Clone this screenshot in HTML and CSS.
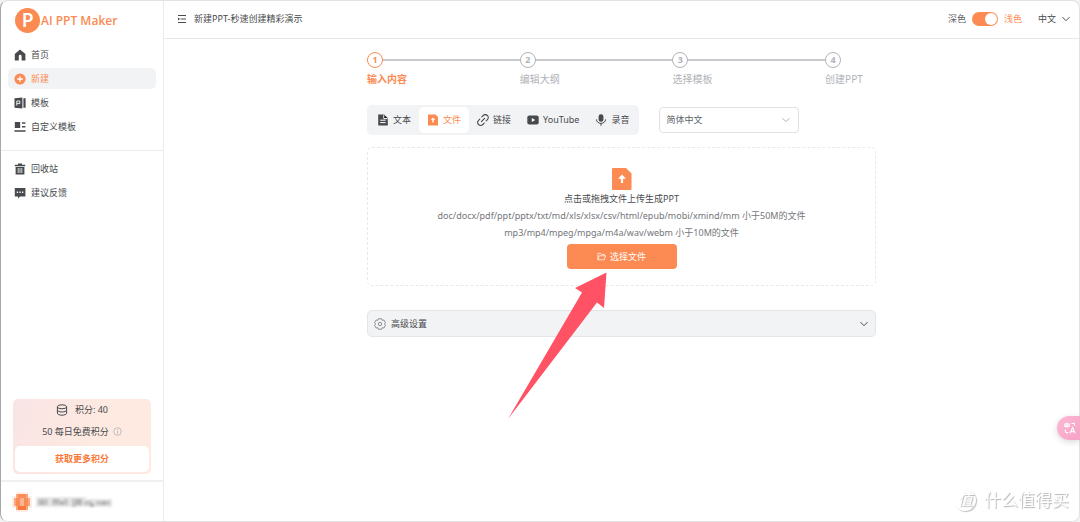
FILE: index.html
```html
<!DOCTYPE html>
<html lang="zh-CN">
  <head>
    <meta charset="utf-8" />
    <title>AI PPT Maker</title>
    <link rel="stylesheet" href="styles.css">
  </head>
  <body>
    <div class="app">
      <aside class="sidebar">
        <a class="logo" href="#">
          <span class="logo-mark">P</span>
          <span class="logo-text">AI PPT Maker</span>
        </a>
        <nav class="menu">
          <a class="menu-item" href="#">
            <svg class="icon" viewBox="0 0 12 12"><path fill="currentColor" d="M6 .6 11.4 5v6.4H7.6V7.2a1.4 1.4 0 0 0-2.8 0v4.2H.8V5z"/><path fill="#fff" d="M5.4 7.4h1.3v4H5.4z" opacity=".4"/></svg>
            首页
          </a>
          <a class="menu-item active" href="#">
            <svg class="icon" viewBox="0 0 12 12"><circle cx="6" cy="6" r="5.6" fill="currentColor"/><path stroke="#fff" stroke-width="1.3" d="M6 3.2v5.6M3.2 6h5.6"/></svg>
            新建
          </a>
          <a class="menu-item" href="#">
            <svg class="icon" viewBox="0 0 12 12"><path fill="currentColor" d="M.5 1.3 8.4.4v11.2L.5 10.7zM9.4 1.2h2.2v9.6H9.4z"/><path fill="none" stroke="#fff" stroke-width=".9" d="M2.8 8.6V4h3v2.600h-3"/></svg>
            模板
          </a>
          <a class="menu-item" href="#">
            <svg class="icon" viewBox="0 0 12 12"><path fill="currentColor" d="M.8 1h5.4v6H.8zM8 1.2h3.4v1.6H8zM8 5h3.4v1.6H8zM.4 9.2h11.2v1.6H.4z"/></svg>
            自定义模板
          </a>
        </nav>
        <nav class="menu menu-extra">
          <a class="menu-item" href="#">
            <svg class="icon" viewBox="0 0 12 12"><path fill="currentColor" d="M4 .6h4v1.2h3.2v1.5H.8V1.8H4zM1.6 4h8.8v7.4H1.6z"/><path stroke="#fff" stroke-width=".8" d="M4.2 5v5M6 5v5M7.8 5v5"/></svg>
            回收站
          </a>
          <a class="menu-item" href="#">
            <svg class="icon" viewBox="0 0 12 12"><path fill="currentColor" d="M.8 1h10.6v8.4H6L4 11.4v-2H.8z"/><path fill="#fff" d="M2.8 4.6h1.3v1.3H2.8zM5.4 4.6h1.3v1.3H5.4zM8 4.6h1.3v1.3H8z"/></svg>
            建议反馈
          </a>
        </nav>
        <section class="credits">
          <p class="credits-row">
            <svg class="icon" viewBox="0 0 12 12" fill="none" stroke="currentColor"><ellipse cx="6" cy="2.8" rx="4.6" ry="2"/><path d="M1.4 2.8v6.4c0 1.1 2 2 4.6 2s4.6-.9 4.6-2V2.8M1.4 6c0 1.1 2 2 4.6 2s4.6-.9 4.6-2"/></svg>
            积分: 40
          </p>
          <p class="credits-row free">
            50 每日免费积分
            <svg class="info" viewBox="0 0 10 10" fill="none" stroke="#a8abb2" stroke-width=".8"><circle cx="5" cy="5" r="4.2"/><path d="M5 4.3v3.2M5 2.4v1"/></svg>
          </p>
          <button class="credits-button" type="button">获取更多积分</button>
        </section>
        <div class="account">
          <svg class="avatar" viewBox="0 0 20 20" shape-rendering="crispEdges">
            <path fill="#fdeee6" d="M4 0h12v4h4v12h-4v4H4v-4H0V4h4z"/>
            <path fill="#fba77f" d="M4 2h12v16H4zM2 6h16v8H2z"/>
            <path fill="#f98d58" d="M6 2h8v14H6zM4 6h12v8H4z"/>
            <path fill="#fbb392" d="M8 6h4v8H8z"/>
            <path fill="#f7783a" d="M6 14h8v4H6z"/>
          </svg>
          <svg class="account-name" viewBox="0 0 76 10" shape-rendering="crispEdges">
            <path fill="#e6e6e6" d="M0 0h50v10H0zM50 2h26v8H50z"/>
            <path fill="#c4c4c4" d="M2 2h10v6H2zM16 2h8v6h-8zM28 2h4v6h-4zM36 2h4v8h-4zM48 4h8v4h-8zM60 4h14v4H60z"/>
            <path fill="#b4b4b4" d="M4 4h4v4H4zM18 2h4v4h-4zM24 4h4v4h-4zM40 2h6v6h-6zM54 6h4v4h-4zM66 4h4v4h-4z"/>
          </svg>
        </div>
      </aside>

      <div class="page">
        <header class="topbar">
          <button class="fold" type="button" aria-label="折叠菜单">
            <svg viewBox="0 0 10 10" stroke="currentColor" fill="none"><path d="M1 1.5h8M3.5 5H9M1 8.5h8"/><path fill="currentColor" stroke="none" d="M1 3.4v3.2L3 5z"/></svg>
          </button>
          <h1 class="title">新建PPT-秒速创建精彩演示</h1>
          <label class="theme">
            <span>深色</span>
            <input class="switch" type="checkbox" checked>
            <span class="theme-light">浅色</span>
          </label>
          <button class="language" type="button">
            中文
            <svg class="chevron" viewBox="0 0 10 10"><path d="M1.5 3.2 5 6.7l3.5-3.5"/></svg>
          </button>
        </header>

        <main class="content">
          <ol class="steps">
            <li class="step current"><span class="step-number">1</span><span class="step-label">输入内容</span></li>
            <li class="step"><span class="step-number">2</span><span class="step-label">编辑大纲</span></li>
            <li class="step"><span class="step-number">3</span><span class="step-label">选择模板</span></li>
            <li class="step"><span class="step-number">4</span><span class="step-label">创建PPT</span></li>
          </ol>

          <div class="source">
            <div class="tabs">
              <button class="tab" type="button">
                <svg class="icon" viewBox="0 0 12 12"><path fill="currentColor" d="M1.2.6h6l3.6 3.6v7.2H1.2z"/><path stroke="#fff" d="M3.2 6.2h5.4M3.2 8.6h5.4M6.8 1v3.6h3.6"/></svg>
                文本
              </button>
              <button class="tab active" type="button">
                <svg class="icon" viewBox="0 0 12 12"><path fill="currentColor" d="M1 .6h7.6L11 3v8.4H1z"/><path fill="#fff" d="m6 3.4 2.4 2.4H6.7v2.6H5.3V5.8H3.6z"/></svg>
                文件
              </button>
              <button class="tab" type="button">
                <svg class="icon" viewBox="0 0 12 12" fill="none" stroke="currentColor" stroke-width="1.1" stroke-linecap="round"><path d="M4.8 2.8 6.2 1.5a2.9 2.9 0 0 1 4.2 4.2L9.2 6.9M7.2 9.2l-1.4 1.3a2.9 2.9 0 0 1-4.2-4.2l1.2-1.2M4.4 7.6l3.2-3.2"/></svg>
                链接
              </button>
              <button class="tab" type="button">
                <svg class="icon" viewBox="0 0 12 12"><rect x=".3" y="1.4" width="11.4" height="9.2" rx="2" fill="currentColor"/><path fill="#fff" d="m4.8 4 3.4 2-3.4 2z"/></svg>
                YouTube
              </button>
              <button class="tab" type="button">
                <svg class="icon" viewBox="0 0 12 12"><rect x="3.6" y=".2" width="4.8" height="7.6" rx="2.4" fill="currentColor"/><path fill="none" stroke="currentColor" d="M1.4 5.4a4.6 4 0 0 0 9.2 0M6 9.4v2.4"/></svg>
                录音
              </button>
            </div>
            <div class="select">
              <select aria-label="语言">
                <option>简体中文</option>
              </select>
              <svg class="chevron" viewBox="0 0 10 10"><path d="M1.5 3.2 5 6.7l3.5-3.5"/></svg>
            </div>
          </div>

          <section class="upload">
            <svg class="upload-icon" viewBox="0 0 20 22"><path fill="#fb8b52" d="M1 0h13l5.500 5.500V21a1 1 0 0 1-1 1H1a1 1 0 0 1-1-1V1a1 1 0 0 1 1-1z"/><path fill="#fff" d="m10 6.500 4 4.300h-2.900V15H8.900v-4.200H6z"/></svg>
            <p class="upload-title">点击或拖拽文件上传生成PPT</p>
            <p class="upload-hint">doc/docx/pdf/ppt/pptx/txt/md/xls/xlsx/csv/html/epub/mobi/xmind/mm 小于50M的文件</p>
            <p class="upload-hint">mp3/mp4/mpeg/mpga/m4a/wav/webm 小于10M的文件</p>
            <button class="upload-button" type="button">
              <svg viewBox="0 0 10 10" fill="none" stroke="currentColor" stroke-width=".8"><path d="M1 8.600V1.400h2.800l1 1.200H8.400v1.600M1 8.600l1.500-4.400h7L8.200 8.600z"/></svg>
              选择文件
            </button>
            <svg class="pointer" viewBox="0 0 99 147"><path fill="#ff5365" d="M98.500.500 67 16l7 4.500L0 147 89 30.500l7 5.500z"/></svg>
          </section>

          <button class="advanced" type="button">
            <svg class="icon" viewBox="0 0 12 12" fill="none" stroke="currentColor" stroke-width=".8"><path d="M4.300.8h3.400l.5 1.500 1.700-.3 1.600 2.800L10.400 6l1.100 1.200L9.900 10l-1.700-.3-.5 1.500H4.300l-.5-1.500-1.700.3L.5 7.200 1.600 6 .5 4.800 2.100 2l1.700.3z"/><circle cx="6" cy="6" r="1.700"/></svg>
            高级设置
            <svg class="chevron" viewBox="0 0 10 10"><path d="M1.500 3.200 5 6.700l3.500-3.500"/></svg>
          </button>
        </main>
      </div>
    </div>

    <button class="translate" type="button" aria-label="翻译">
      <svg viewBox="0 0 12 12" fill="none" stroke="#fff" stroke-width="1.100"><path d="M.8 2h4.400v2.400H.8zM3 .6v5.200M7.400 1.500h3v2.200M1.400 7.600v1.600c0 1 .5 1.400 1.400 1.400h1.600M6 11.400 8.600 5.600l2.600 5.800M7 9.600h3.200"/></svg>
    </button>
    <div class="watermark"><span class="watermark-mark">值</span>什么值得买</div>
  </body>
</html>
```
FILE: styles.css
```css
* {
  box-sizing: border-box;
}

body {
  margin: 0;
  background-color: #f3f3f3;
  color: #484a4d;
  font: 9px/14px "Noto Sans", "Noto Sans CJK SC", sans-serif;
}

button,
select {
  border: 0;
  padding: 0;
  background: none;
  color: inherit;
  font: inherit;
  cursor: pointer;
}

a {
  color: inherit;
  text-decoration: none;
}

p,
h1,
ol {
  margin: 0;
  padding: 0;
}

.app {
  display: flex;
  min-height: 100vh;
  border: 1px solid #e2e2e2;
  border-left-color: #a8a8a8;
  border-radius: 8px;
  background-color: #ffffff;
}

.icon {
  width: 12px;
  height: 12px;
  flex: none;
}

.chevron {
  width: 10px;
  height: 10px;
  fill: none;
  stroke: currentColor;
}

/* sidebar */
.sidebar {
  display: flex;
  flex-direction: column;
  flex: none;
  width: 163px;
  border-right: 1px solid #ebebeb;
}

.logo {
  display: flex;
  align-items: center;
  gap: 1px;
  padding: 7px 14px 6px;
  color: #fb8b52;
}

.logo-mark {
  width: 25px;
  height: 25px;
  border-radius: 50%;
  background-color: #fb8b52;
  color: #ffffff;
  font: bold 18px/25px Lato, sans-serif;
  text-align: center;
}

.logo-text {
  font: 600 12px/16px "Open Sans", sans-serif;
}

.menu {
  display: flex;
  flex-direction: column;
  gap: 3px;
  padding: 5px 7px 13px;
}

.menu-extra {
  padding-top: 7px;
  border-top: 1px solid #ebebeb;
}

.menu-item {
  display: flex;
  align-items: center;
  gap: 5px;
  height: 21px;
  padding-left: 6px;
  border-radius: 5px;
}

.menu-item.active {
  background-color: #f2f3f5;
  color: #fb8b52;
}

.credits {
  margin: auto 12px 6px;
  padding: 0 2px 2px;
  border-radius: 5px;
  background: linear-gradient(110deg, #f9e4e6, #feeae0 60%);
}

.credits-row {
  display: flex;
  align-items: center;
  justify-content: center;
  gap: 7px;
  height: 21px;
}

.credits-row.free {
  height: 26px;
  gap: 4px;
  padding-bottom: 3px;
}

.info {
  width: 9px;
  height: 9px;
}

.credits-button {
  width: 100%;
  height: 26px;
  border-radius: 5px;
  background-color: #ffffff;
  color: #fb7a3a;
  font-weight: bold;
}

.account {
  display: flex;
  align-items: center;
  gap: 4px;
  height: 41px;
  padding-left: 11px;
  border-top: 2px solid #f0f0f0;
}

.avatar {
  width: 20px;
  height: 20px;
}

.account-name {
  width: 76px;
  height: 10px;
  filter: blur(1px);
}

/* header */
.page {
  flex: 1;
  min-width: 0;
}

.topbar {
  display: flex;
  align-items: center;
  height: 38px;
  padding: 0 8px 2px 13px;
  border-bottom: 1px solid #e8e8e8;
}

.fold {
  display: flex;
  width: 10px;
  margin-right: 7px;
}

.title {
  flex: 1;
  font-size: 9px;
  font-weight: normal;
}

.theme {
  display: flex;
  align-items: center;
  gap: 6px;
  color: #606266;
}

.theme-light {
  color: #fb8b52;
}

.switch {
  display: flex;
  justify-content: flex-end;
  appearance: none;
  width: 26px;
  height: 14px;
  margin: 0;
  padding: 1px;
  border-radius: 7px;
  background-color: #fb8b52;
}

.switch::before {
  content: "";
  width: 12px;
  height: 12px;
  border-radius: 50%;
  background-color: #ffffff;
}

.switch:not(:checked) {
  justify-content: flex-start;
}

.language {
  display: flex;
  align-items: center;
  gap: 5px;
  margin-left: 16px;
}

/* content */
.content {
  max-width: 509px;
  margin: 0 auto;
  padding-top: 13px;
}

.steps {
  display: flex;
  list-style: none;
  color: #b1b3b8;
}

.step {
  flex: 3;
  background: linear-gradient(#c8c9cc, #c8c9cc) 0 7px / 100% 2px no-repeat;
}

.step:last-child {
  flex: 1;
  background: none;
}

.step-number {
  display: block;
  width: 16px;
  height: 16px;
  border: 1px solid currentColor;
  border-radius: 50%;
  background-color: #ffffff;
  font-weight: bold;
  text-align: center;
}

.step-label {
  display: block;
  padding-top: 4px;
  font-size: 10px;
  white-space: nowrap;
}

.step.current {
  color: #fb8b52;
}

.current .step-label {
  font-weight: bold;
}

.source {
  display: flex;
  align-items: center;
  gap: 20px;
  margin-top: 19px;
}

.tabs {
  display: flex;
  padding: 2px;
  border-radius: 5px;
  background-color: #f2f3f5;
}

.tab {
  display: flex;
  align-items: center;
  gap: 4px;
  height: 26px;
  padding: 0 8px;
  border-radius: 5px;
  white-space: nowrap;
}

.tab.active {
  background-color: #ffffff;
  color: #fb8b52;
}

.select {
  display: grid;
  align-items: center;
  width: 140px;
  color: #606266;
}

.select select {
  grid-area: 1 / 1;
  appearance: none;
  height: 26px;
  padding: 0 6px;
  border: 1px solid #dfe1e5;
  border-radius: 4px;
}

.select .chevron {
  grid-area: 1 / 1;
  justify-self: end;
  margin-right: 8px;
  color: #b1b3b8;
  pointer-events: none;
}

.upload {
  position: relative;
  display: flex;
  flex-direction: column;
  align-items: center;
  margin-top: 12px;
  padding: 20px 0 16px;
  border: 1px dashed #e8e9eb;
  border-radius: 5px;
}

.upload-icon {
  width: 20px;
  height: 22px;
}

.upload-title,
.upload-hint {
  line-height: 17px;
}

.upload-hint {
  color: #73767a;
}

.upload-button {
  display: flex;
  align-items: center;
  justify-content: center;
  gap: 4px;
  width: 110px;
  height: 25px;
  margin-top: 3px;
  border-radius: 4px;
  background-color: #fb8b52;
  color: #ffffff;
}

.upload-button svg {
  width: 9px;
  height: 9px;
}

/* arrow drawn over the page, its tip at the upload button */
.pointer {
  position: absolute;
  top: 124px;
  left: calc(50% - 114px);
  z-index: 1;
  width: 99px;
  height: 147px;
}

.advanced {
  display: flex;
  align-items: center;
  gap: 5px;
  width: 100%;
  height: 27px;
  margin-top: 24px;
  padding: 0 6px;
  border: 1px solid #e4e5e8;
  border-radius: 5px;
  background-color: #f2f3f5;
}

.advanced .icon {
  color: #73767a;
}

.advanced .chevron {
  margin-left: auto;
}

/* floating items */
.translate {
  position: fixed;
  right: 0;
  bottom: 82px;
  display: flex;
  align-items: center;
  width: 23px;
  height: 24px;
  padding-left: 7px;
  border-radius: 12px 0 0 12px;
  background: linear-gradient(135deg, #fcb8d4, #f5a3c6);
  box-shadow: 0 2px 6px rgba(0, 0, 0, 0.15);
}

.translate svg {
  width: 12px;
  height: 12px;
}

.watermark {
  position: fixed;
  right: 11px;
  bottom: 10px;
  display: flex;
  align-items: center;
  gap: 8px;
  color: #ffffff;
  font-size: 17px;
  line-height: 24px;
  text-shadow: 1px 1px 1px #b4b4b4;
}

.watermark-mark {
  width: 22px;
  height: 22px;
  border-radius: 50%;
  box-shadow: 1px 1px 1px #c0c0c0;
  font-size: 15px;
  font-style: italic;
  line-height: 20px;
  text-align: center;
}
```
